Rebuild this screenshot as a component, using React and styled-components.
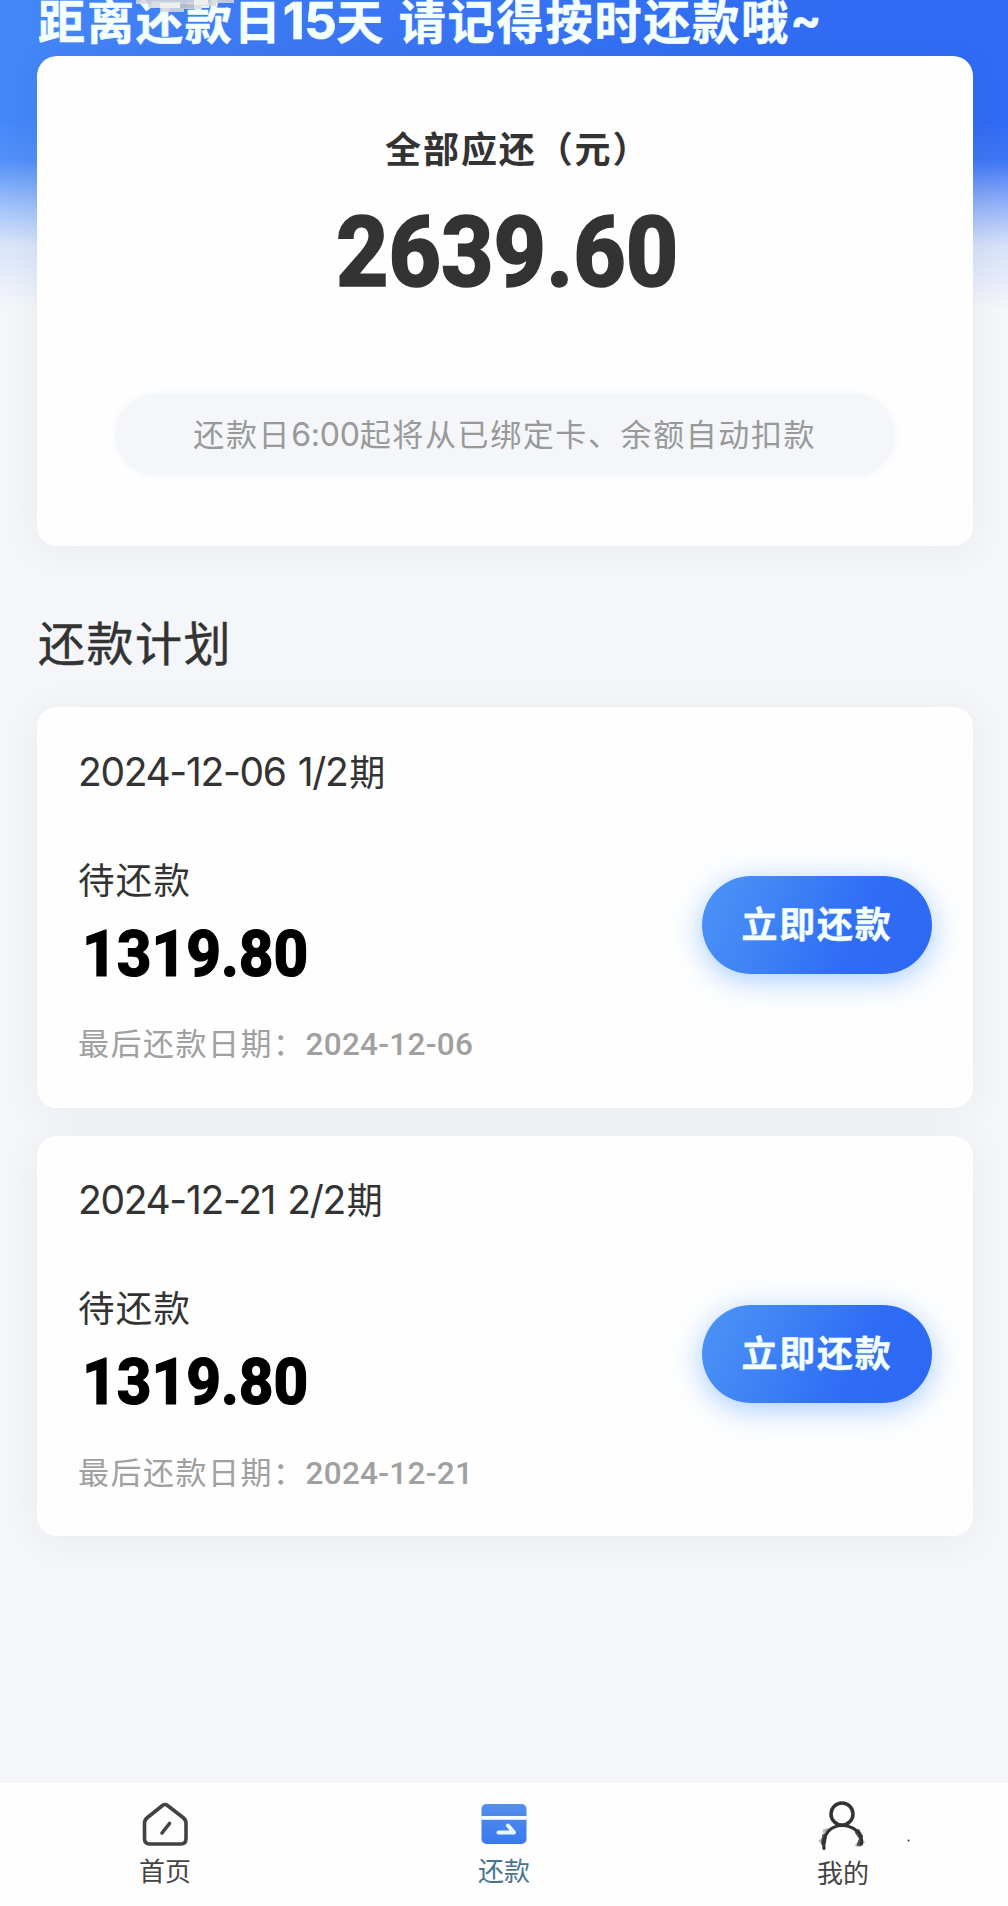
import React from "react";
import styled, { createGlobalStyle } from "styled-components";

const GlobalStyle = createGlobalStyle`
  *, *::before, *::after { box-sizing: border-box; }
  body {
    margin: 0;
    background: #f5f6fa;
    font-family: Lato, "Noto Sans CJK SC", sans-serif;
    color: #333;
  }
`;

const Page = styled.div`
  display: flex;
  flex-direction: column;
  width: 1008px;
  height: 1906px;
  overflow: hidden;
  background:
    linear-gradient(180deg, rgba(245, 246, 250, 0) 120px, rgba(245, 246, 250, 0.08) 160px, rgba(245, 246, 250, 0.5) 204px, rgba(245, 246, 250, 0.84) 245px, #f5f6fa 310px),
    linear-gradient(90deg, #4488f8 0%, #3d78f3 28%, #306df3 75%, #2f6bf4 100%);
`;

const Banner = styled.header`
  position: relative;
  flex: none;
  height: 56px;
  padding-left: 38px;
  font-size: 47px;
  line-height: 42px;
  letter-spacing: 1.95px;
  font-weight: 700;
  color: #f4ffff;
  white-space: pre;
  -webkit-text-stroke: 0.6px #f4ffff;
`;

const BannerDigits = styled.span`
  font-family: Inter, sans-serif;
  font-size: 51px;
  letter-spacing: -0.5px;
  line-height: 0;
`;

const Tilde = styled.span`
  font-family: Inter, sans-serif;
  font-size: 46px;
  line-height: 0;
  vertical-align: 3px;
`;

const Smudge = styled.svg`
  position: absolute;
  left: 136px;
  top: 0;
`;

const Content = styled.main`
  flex: 1;
  display: flex;
  flex-direction: column;
  padding: 0 35.5px 0 37px;
`;

const Card = styled.section`
  flex: none;
  background: #fefefe;
  border-radius: 20px;
  box-shadow: 0 4px 36px rgba(40, 45, 50, 0.06);
`;

const Summary = styled(Card)`
  height: 490px;
  display: flex;
  flex-direction: column;
  align-items: center;
`;

const SummaryTitle = styled.h1`
  margin: 65px 0 0 26px;
  font-size: 36px;
  line-height: 56px;
  letter-spacing: 1.9px;
  font-weight: 700;
  white-space: nowrap;
`;

const Figure = styled.div`
  font-family: Roboto, sans-serif;
  font-weight: 800;
  font-size: ${(p) => p.$size}px;
  line-height: 1;
  color: ${(p) => p.$color};
  white-space: nowrap;
  -webkit-text-stroke: ${(p) => p.$stroke}px ${(p) => p.$color};
  transform: scaleX(${(p) => p.$stretch});
  transform-origin: ${(p) => p.$origin || "left"} center;
`;

const Total = styled.div`
  height: 100px;
  margin: 28px 0 0 5px;
`;

const Notice = styled.p`
  margin: 89px 0 0;
  width: 780px;
  height: 82px;
  border-radius: 41px;
  background: #f4f6f9;
  box-shadow: 0 0 8px #f4f6f9;
  color: #999;
  text-align: center;
  font-size: 31px;
  line-height: 81px;
  letter-spacing: 1.6px;
  white-space: nowrap;
`;

const NoticeTime = styled.span`
  font-family: Inter, sans-serif;
  font-size: 32px;
  font-weight: 400;
  letter-spacing: -0.2px;
  line-height: 1;
`;

const SectionTitle = styled.h2`
  margin: 61px 0 0;
  height: 100px;
  padding-left: 1px;
  font-size: 47px;
  line-height: 72px;
  letter-spacing: 1.5px;
  font-weight: 400;
  -webkit-text-stroke: 0.4px #333;
`;

const PlanList = styled.div`
  display: flex;
  flex-direction: column;
  gap: 28px;
`;

const Plan = styled(Card)`
  height: 400.5px;
  padding: 36.5px 41px 0 41px;
`;

const PlanTerm = styled.h3`
  display: flex;
  align-items: baseline;
  margin: 0;
  height: 56px;
  font-size: 36px;
  line-height: 56px;
  font-weight: 400;
  white-space: pre;
`;

const Digits = styled.span`
  font-family: Inter, sans-serif;
  font-size: 39px;
  letter-spacing: -1.35px;
  word-spacing: 2.5px;
  margin-right: 2px;
  line-height: 1;
`;

const PlanBody = styled.div`
  display: flex;
  justify-content: space-between;
  margin-top: 52px;
`;

const Due = styled.div`
  font-size: 36.5px;
  line-height: 56px;
`;

const DueLabel = styled.div`
  height: 69px;
  letter-spacing: 1.2px;
`;

const DueAmount = styled.div`
  height: 67px;
  padding-left: 4px;
`;

const Deadline = styled.div`
  display: flex;
  align-items: baseline;
  margin-top: 27.5px;
  font-size: 31px;
  line-height: 56px;
  letter-spacing: 1.5px;
  color: #a0a0a0;
`;

const DeadlineDate = styled.span`
  font-family: Roboto, sans-serif;
  font-weight: 500;
  font-size: 31.5px;
  letter-spacing: 0.3px;
`;

const PayButton = styled.button`
  width: 230px;
  height: 98px;
  margin-top: 24.5px;
  padding: 0 0 6px 1px;
  border: 0;
  border-radius: 49px;
  background: linear-gradient(115deg, #4b94f5 0%, #4287f5 25%, #2f6df6 65%, #2c68f3 100%);
  box-shadow: 0 6px 30px rgba(60, 145, 255, 0.45);
  color: #f4ffff;
  font: 700 36px "Noto Sans CJK SC", sans-serif;
  letter-spacing: 1.7px;
  -webkit-text-stroke: 0.4px #f4ffff;
`;

const TabBar = styled.nav`
  flex: none;
  display: flex;
  justify-content: space-between;
  height: 123px;
  padding: 17px 115px 0;
  background: #fefefe;
`;

const Tab = styled.a`
  display: flex;
  flex-direction: column;
  align-items: center;
  width: 100px;
  font-size: 26px;
  line-height: 34px;
  color: ${(p) => (p.$active ? "#4b7494" : "#444")};
  svg { flex: none; margin-bottom: ${(p) => p.$gap}px; overflow: visible; }
`;

const HomeIcon = () => (
  <svg width="48" height="50" viewBox="0 0 48 50" fill="none" stroke="#424242" strokeWidth="3.6" strokeLinecap="round" strokeLinejoin="round">
    <path d="M21.5 5.5q2.5-2 5 0l15.500 12q3 2.500 3 5.500v15.500q0 5.500-5 5.500H8.500q-5 0-5-5.500V23q0-3 3-5.500z" />
    <path d="M28.500 23.500 21 33" />
  </svg>
);

const CardIcon = () => (
  <svg width="48" height="50" viewBox="0 0 48 50">
    <defs>
      <linearGradient id="cardFill" x1="0" y1="0" x2="0" y2="1">
        <stop offset="0" stopColor="#568fea" />
        <stop offset="1" stopColor="#3779f0" />
      </linearGradient>
    </defs>
    <rect x="1.500" y="4" width="45" height="40" rx="5" fill="url(#cardFill)" />
    <path d="M1.500 17.800h45" stroke="#f4ffff" strokeWidth="3.800" />
    <path d="M18.500 32.500h15.500l-6-7" fill="none" stroke="#e8fbff" strokeWidth="4" strokeLinecap="round" strokeLinejoin="round" />
  </svg>
);

const UserIcon = () => (
  <svg width="48" height="50" viewBox="0 0 48 50" fill="none" stroke="#333" strokeLinecap="round">
    <circle cx="23" cy="14" r="11" strokeWidth="3.500" />
    <path d="M5 48.500C3 34 12 25.500 23 25.500S44 33 42.500 44" strokeWidth="3.200" />
    <path d="M5.500 36 4.500 43M38.500 32l3 4.500M41.500 41l-1 3" strokeWidth="5" opacity=".8" />
    <path d="M5.500 31l3-1M1.500 41l2-1M39.500 30.500v2M44 42l-6 3" strokeWidth="3.500" opacity=".35" />
    <path d="M89.500 40.500h.1" strokeWidth="1.800" />
  </svg>
);

const plans = [
  { date: "2024-12-06", term: "1/2", amount: "1319.80" },
  { date: "2024-12-21", term: "2/2", amount: "1319.80" },
];

const tabs = [
  { label: "首页", Icon: HomeIcon, gap: 4 },
  { label: "还款", Icon: CardIcon, gap: 4, active: true },
  { label: "我的", Icon: UserIcon, gap: 6 },
];

export default function App() {
  return (
    <Page>
      <GlobalStyle />
      <Banner>
        距离还款日<BannerDigits>15</BannerDigits>天 请记得按时还款哦<Tilde>~</Tilde>
        <Smudge width="98" height="12" viewBox="0 0 98 12">
          <path d="M0 0h98v3H80v3H66v3H48v3H24V8H12V4H0z" fill="#d5d8dd" opacity=".85" />
          <path d="M24 3h20v5H24zM58 0h14v5H58z" fill="#efefed" />
          <path d="M44 4h14v4H44z" fill="#aeb4c2" opacity=".7" />
        </Smudge>
      </Banner>
      <Content>
        <Summary>
          <SummaryTitle>全部应还（元）</SummaryTitle>
          <Total>
            <Figure $size={97.5} $stretch={0.935} $stroke={1.6} $origin="center" $color="#333">2639.60</Figure>
          </Total>
          <Notice>还款日<NoticeTime>6:00</NoticeTime>起将从已绑定卡、余额自动扣款</Notice>
        </Summary>
        <SectionTitle>还款计划</SectionTitle>
        <PlanList>
          {plans.map((plan) => (
            <Plan key={plan.date}>
              <PlanTerm>
                <Digits>{plan.date} {plan.term}</Digits>期
              </PlanTerm>
              <PlanBody>
                <Due>
                  <DueLabel>待还款</DueLabel>
                  <DueAmount>
                    <Figure $size={65.5} $stretch={0.92} $stroke={1.2} $color="#000">{plan.amount}</Figure>
                  </DueAmount>
                  <Deadline>
                    最后还款日期：<DeadlineDate>{plan.date}</DeadlineDate>
                  </Deadline>
                </Due>
                <PayButton>立即还款</PayButton>
              </PlanBody>
            </Plan>
          ))}
        </PlanList>
      </Content>
      <TabBar>
        {tabs.map(({ label, Icon, gap, active }) => (
          <Tab key={label} $gap={gap} $active={active}>
            <Icon />
            {label}
          </Tab>
        ))}
      </TabBar>
    </Page>
  );
}
